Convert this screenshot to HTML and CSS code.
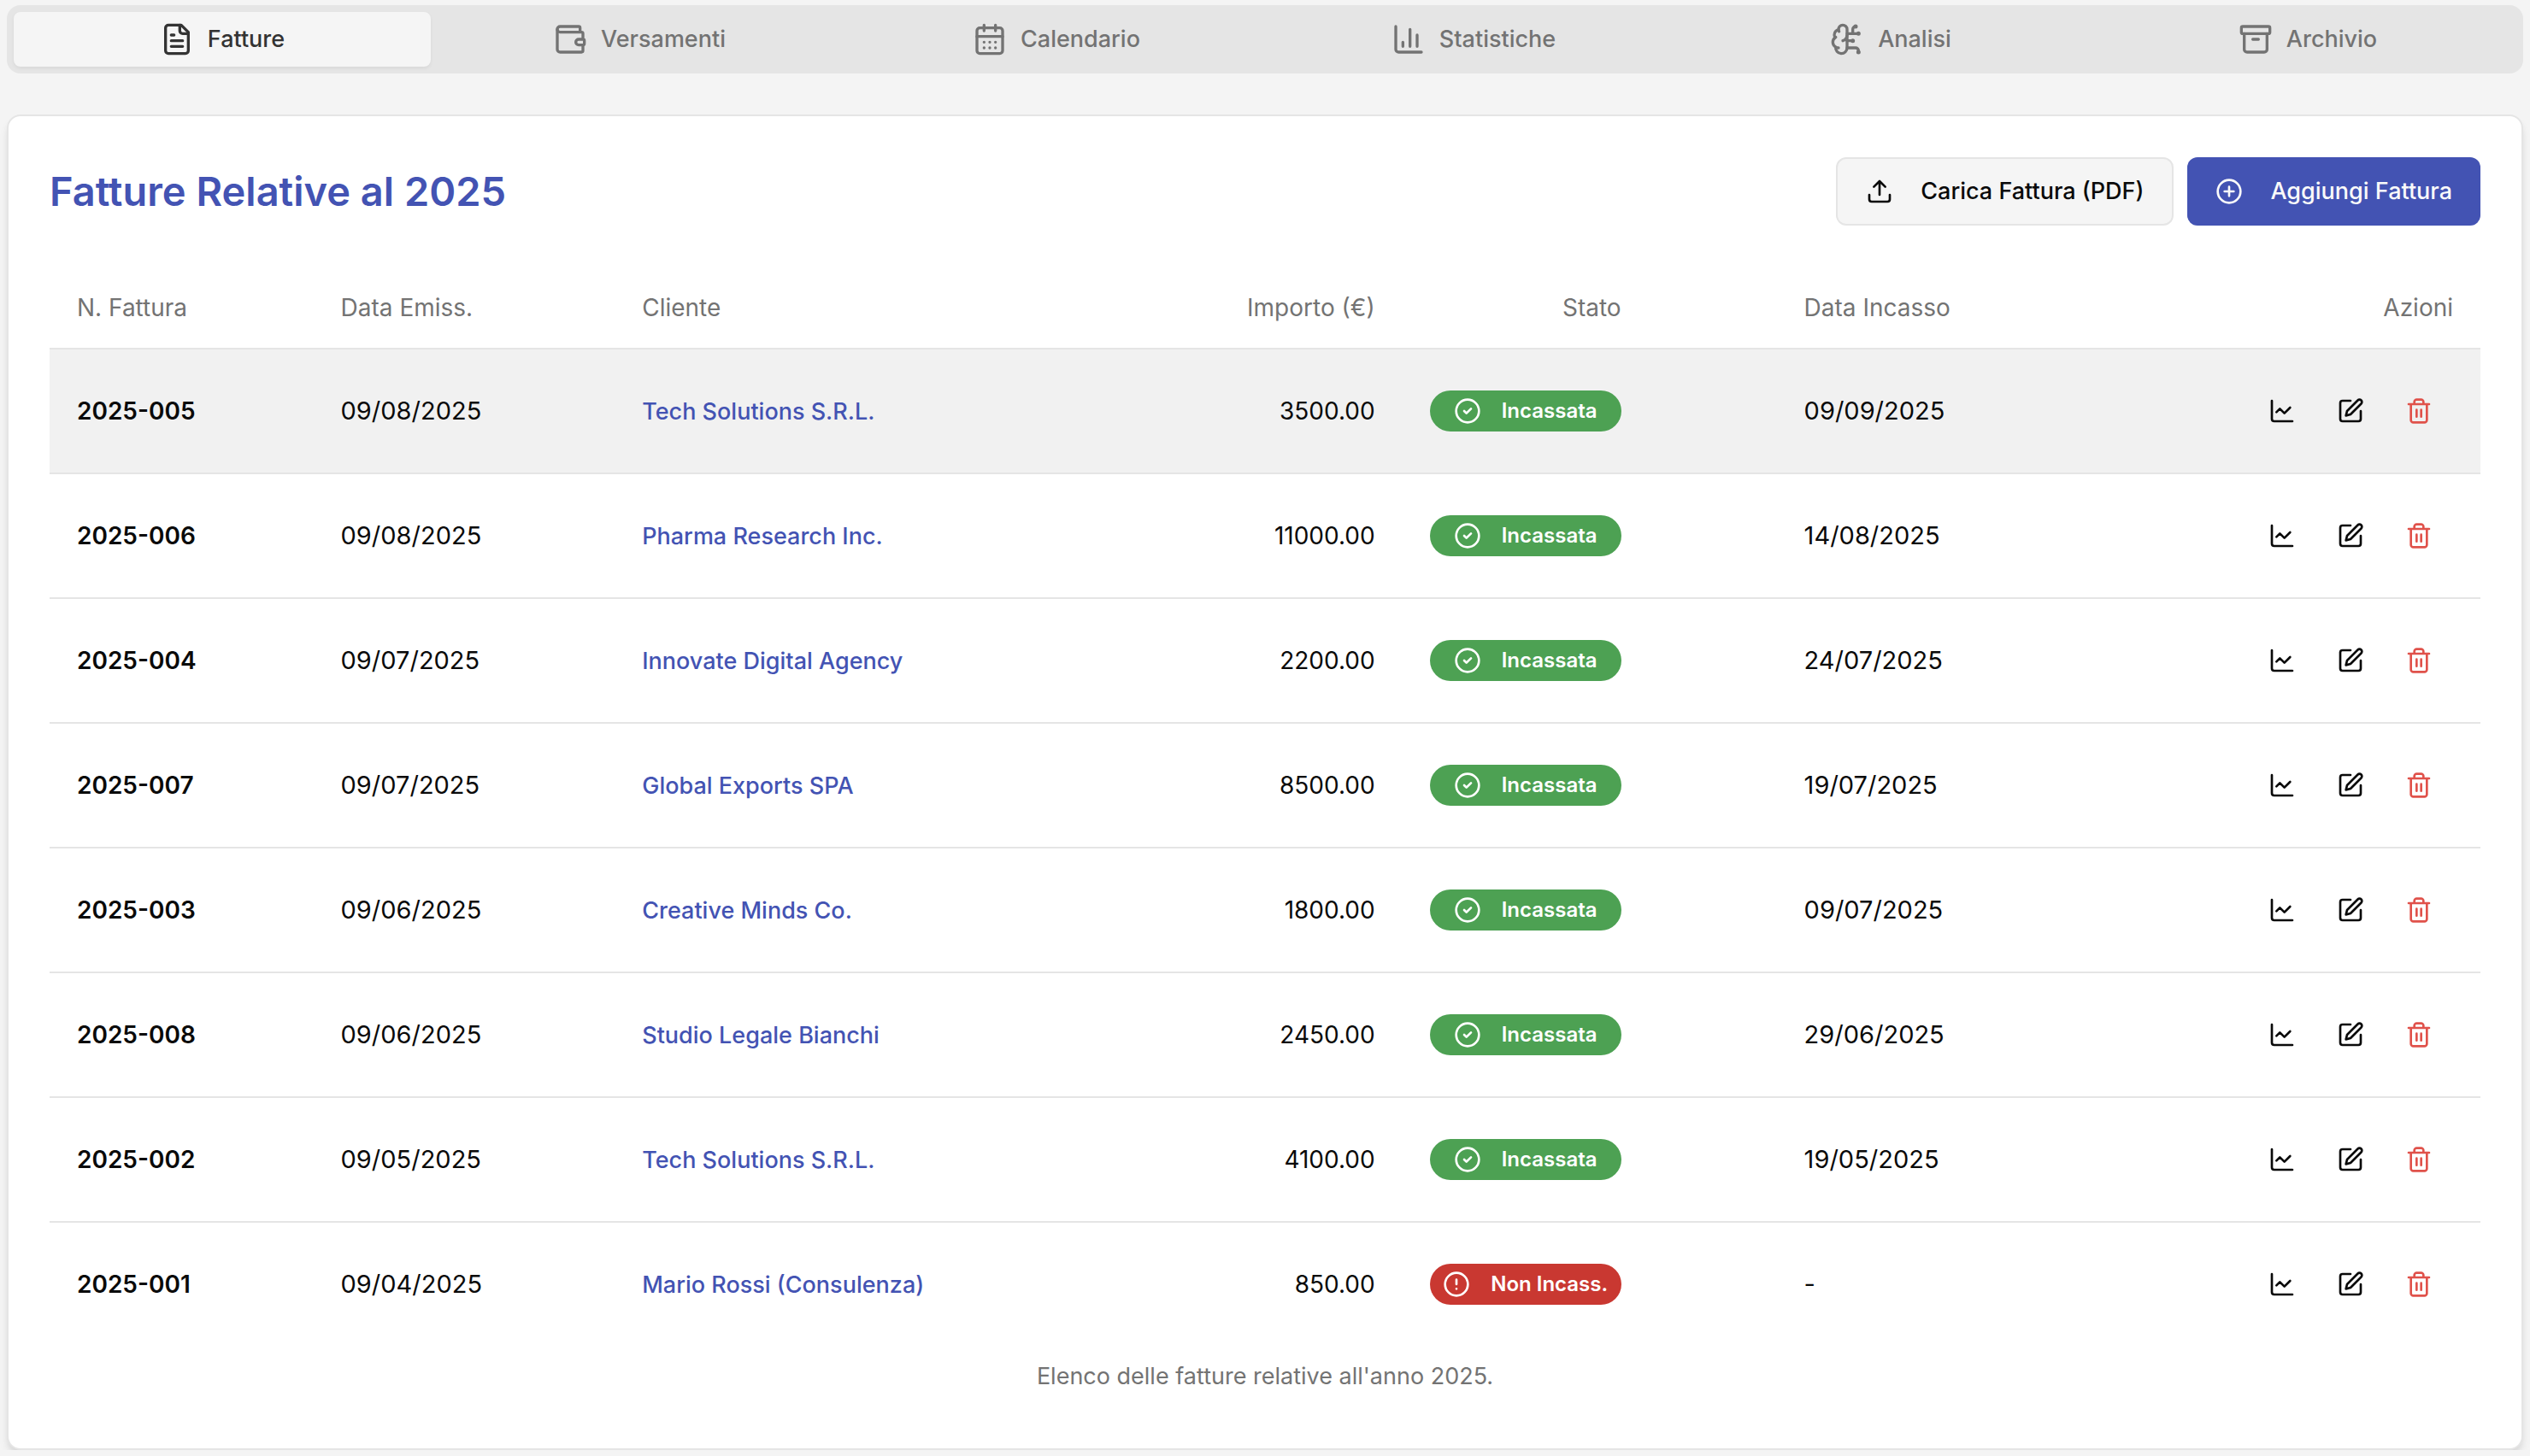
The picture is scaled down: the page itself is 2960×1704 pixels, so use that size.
FILE: index.html
```html
<!DOCTYPE html>
<html lang="it">
<head>
<meta charset="utf-8">
<meta name="viewport" content="width=device-width, initial-scale=1">
<title>Fatture Relative al 2025</title>
<link rel="stylesheet" href="styles.css">
<script src="app.js" defer></script>
</head>
<body>
<svg class="sprite" aria-hidden="true">
  <symbol id="i-file" viewBox="0 0 24 24"><path d="M15 2H6a2 2 0 0 0-2 2v16a2 2 0 0 0 2 2h12a2 2 0 0 0 2-2V7Z"/><path d="M14 2v4a2 2 0 0 0 2 2h4"/><path d="M10 9H8M16 13H8M16 17H8"/></symbol>
  <symbol id="i-wallet" viewBox="0 0 24 24"><path d="M19 7V4a1 1 0 0 0-1-1H5a2 2 0 0 0 0 4h15a1 1 0 0 1 1 1v4h-3a2 2 0 0 0 0 4h3a1 1 0 0 0 1-1v-2a1 1 0 0 0-1-1"/><path d="M3 5v14a2 2 0 0 0 2 2h15a1 1 0 0 0 1-1v-4"/></symbol>
  <symbol id="i-calendar" viewBox="0 0 24 24"><path d="M8 2v4M16 2v4"/><rect width="18" height="18" x="3" y="4" rx="2"/><path d="M3 10h18M8 14h.01M12 14h.01M16 14h.01M8 18h.01M12 18h.01M16 18h.01"/></symbol>
  <symbol id="i-bars" viewBox="0 0 24 24"><path d="M3 3v16a2 2 0 0 0 2 2h16"/><path d="M18 17V9M13 17V5M8 17v-3"/></symbol>
  <symbol id="i-brain" viewBox="0 0 24 24"><path d="M12 5a3 3 0 1 0-5.997.125 4 4 0 0 0-2.526 5.77 4 4 0 0 0 .556 6.588A4 4 0 1 0 12 18Z"/><path d="M9 13a4.5 4.5 0 0 0 3-4M6.003 5.125A3 3 0 0 0 6.401 6.5M3.477 10.896a4 4 0 0 1 .585-.396M6 18a4 4 0 0 1-1.967-.516M12 13h4M12 18h6a2 2 0 0 1 2 2v1M12 8h8M16 8V5a2 2 0 0 1 2-2"/><circle cx="16" cy="13" r=".5"/><circle cx="18" cy="3" r=".5"/><circle cx="20" cy="21" r=".5"/><circle cx="20" cy="8" r=".5"/></symbol>
  <symbol id="i-archive" viewBox="0 0 24 24"><rect width="20" height="5" x="2" y="3" rx="1"/><path d="M4 8v11a2 2 0 0 0 2 2h12a2 2 0 0 0 2-2V8M10 12h4"/></symbol>
  <symbol id="i-upload" viewBox="0 0 24 24"><path d="M21 15v4a2 2 0 0 1-2 2H5a2 2 0 0 1-2-2v-4M17 8l-5-5-5 5M12 3v12"/></symbol>
  <symbol id="i-plus" viewBox="0 0 24 24"><circle cx="12" cy="12" r="10"/><path d="M8 12h8M12 8v8"/></symbol>
  <symbol id="i-check" viewBox="0 0 24 24"><circle cx="12" cy="12" r="10"/><path d="m9 12 2 2 4-4"/></symbol>
  <symbol id="i-alert" viewBox="0 0 24 24"><circle cx="12" cy="12" r="10"/><path d="M12 8v4M12 16h.01"/></symbol>
  <symbol id="i-line" viewBox="0 0 24 24"><path d="M3 3v16a2 2 0 0 0 2 2h16"/><path d="m19 9-5 5-4-4-3 3"/></symbol>
  <symbol id="i-edit" viewBox="0 0 24 24"><path d="M12 3H5a2 2 0 0 0-2 2v14a2 2 0 0 0 2 2h14a2 2 0 0 0 2-2v-7"/><path d="M18.375 2.625a2.121 2.121 0 1 1 3 3L12 15l-4 1 1-4Z"/></symbol>
  <symbol id="i-trash" viewBox="0 0 24 24"><path d="M3 6h18M19 6v14c0 1-1 2-2 2H7c-1 0-2-1-2-2V6M8 6V4c0-1 1-2 2-2h4c1 0 2 1 2 2v2M10 11v6M14 11v6"/></symbol>
</svg>

<nav class="tabs" role="tablist" aria-label="Sezioni">
  <button class="tab tab-active" role="tab" aria-selected="true"><svg class="icon icon-lg"><use href="#i-file"/></svg>Fatture</button>
  <button class="tab" role="tab"><svg class="icon icon-lg"><use href="#i-wallet"/></svg>Versamenti</button>
  <button class="tab" role="tab"><svg class="icon icon-lg"><use href="#i-calendar"/></svg>Calendario</button>
  <button class="tab" role="tab"><svg class="icon icon-lg"><use href="#i-bars"/></svg>Statistiche</button>
  <button class="tab" role="tab"><svg class="icon icon-lg"><use href="#i-brain"/></svg>Analisi</button>
  <button class="tab" role="tab"><svg class="icon icon-lg"><use href="#i-archive"/></svg>Archivio</button>
</nav>

<main class="card">
  <header class="card-header">
    <h1 class="card-title">Fatture Relative al 2025</h1>
    <div class="card-actions">
      <button class="btn btn-outline"><svg class="icon"><use href="#i-upload"/></svg>Carica Fattura (PDF)</button>
      <button class="btn btn-primary"><svg class="icon"><use href="#i-plus"/></svg>Aggiungi Fattura</button>
    </div>
  </header>
  <table class="invoices">
    <caption>Elenco delle fatture relative all'anno 2025.</caption>
    <colgroup><col class="col-number"><col class="col-issued"><col class="col-client"><col class="col-amount"><col class="col-status"><col class="col-paid"><col class="col-actions"></colgroup>
    <thead>
      <tr><th>N. Fattura</th><th>Data Emiss.</th><th>Cliente</th><th class="right">Importo (€)</th><th><div class="status-label">Stato</div></th><th>Data Incasso</th><th class="right">Azioni</th></tr>
    </thead>
    <tbody id="rows"></tbody>
  </table>
</main>
</body>
</html>
```
FILE: app.js
```js
const invoices = [
  ["2025-005", "09/08/2025", "Tech Solutions S.R.L.", "3500.00", "09/09/2025"],
  ["2025-006", "09/08/2025", "Pharma Research Inc.", "11000.00", "14/08/2025"],
  ["2025-004", "09/07/2025", "Innovate Digital Agency", "2200.00", "24/07/2025"],
  ["2025-007", "09/07/2025", "Global Exports SPA", "8500.00", "19/07/2025"],
  ["2025-003", "09/06/2025", "Creative Minds Co.", "1800.00", "09/07/2025"],
  ["2025-008", "09/06/2025", "Studio Legale Bianchi", "2450.00", "29/06/2025"],
  ["2025-002", "09/05/2025", "Tech Solutions S.R.L.", "4100.00", "19/05/2025"],
  ["2025-001", "09/04/2025", "Mario Rossi (Consulenza)", "850.00", null],
];

const icon = (name) => `<svg class="icon"><use href="#i-${name}"/></svg>`;

const badge = (paid) => paid
  ? `<span class="badge badge-paid">${icon("check")}Incassata</span>`
  : `<span class="badge badge-unpaid">${icon("alert")}Non Incass.</span>`;

document.getElementById("rows").innerHTML = invoices.map(([number, issued, client, amount, paid], i) => `
  <tr${i === 0 ? ' class="row-active"' : ""}>
    <td class="number">${number}</td>
    <td class="date">${issued}</td>
    <td><a class="client" href="#">${client}</a></td>
    <td class="right">${amount}</td>
    <td>${badge(paid)}</td>
    <td class="date">${paid || "-"}</td>
    <td><div class="row-actions">
      <button class="icon-btn" aria-label="Andamento ${number}">${icon("line")}</button>
      <button class="icon-btn" aria-label="Modifica ${number}">${icon("edit")}</button>
      <button class="icon-btn icon-btn-danger" aria-label="Elimina ${number}">${icon("trash")}</button>
    </div></td>
  </tr>`).join("");
```
FILE: styles.css
```css
:root {
  --bg: #f4f4f4;
  --line: #e5e5e5;
  --text: #0a0a0a;
  --muted: #737373;
  --primary: #4353b3;
}

* { box-sizing: border-box; }

body {
  margin: 0;
  padding: 6px 8px 0;
  background: var(--bg);
  color: var(--text);
  font: 400 27px/40px Inter, "Liberation Sans", sans-serif;
}

button {
  border: 0;
  background: none;
  color: inherit;
  font: inherit;
  cursor: pointer;
}

.sprite { position: absolute; width: 0; height: 0; }

.icon {
  flex: none;
  display: block;
  width: 32px;
  height: 32px;
  fill: none;
  stroke: currentColor;
  stroke-width: 2;
  stroke-linecap: round;
  stroke-linejoin: round;
}

.icon-lg { width: 40px; height: 40px; }

.tabs {
  display: grid;
  grid-template-columns: repeat(6, 1fr);
  padding: 8px;
  border-radius: 16px;
  background: var(--line);
  color: var(--muted);
}

.tab {
  display: flex;
  align-items: center;
  justify-content: center;
  gap: 16px;
  height: 64px;
  padding: 0 24px;
  border-radius: 8px;
  font-weight: 500;
}

.tab-active {
  background: #f5f5f5;
  color: #333;
  box-shadow: 0 2px 4px rgb(0 0 0 / 6%);
}

.card {
  margin-top: 48px;
  padding: 48px;
  border: 2px solid var(--line);
  border-radius: 16px;
  background: #fff;
  box-shadow: 0 8px 12px -2px rgb(0 0 0 / 10%), 0 4px 8px -4px rgb(0 0 0 / 10%);
}

.card-header {
  display: flex;
  align-items: center;
  justify-content: space-between;
  padding-bottom: 48px;
}

.card-title {
  margin: 0;
  color: var(--primary);
  font-size: 47px;
  font-weight: 600;
  line-height: 48px;
}

.card-actions { display: flex; gap: 16px; }

.btn {
  display: flex;
  align-items: center;
  gap: 32px;
  height: 80px;
  padding: 0 33px;
  border-radius: 12px;
  font-weight: 500;
}

.btn-outline { border: 2px solid var(--line); background: #f5f5f5; }

.btn-primary { background: var(--primary); color: #fafafa; }

.invoices {
  width: 100%;
  table-layout: fixed;
  border-collapse: collapse;
  caption-side: bottom;
  font-size: 28px;
}

.invoices caption { padding: 16px 0; color: var(--muted); font-size: 27px; }

.col-number { width: 10.85%; }
.col-issued { width: 12.4%; }
.col-client { width: 20%; }
.col-amount { width: 12.4%; }
.col-status { width: 15.4%; }
.col-paid { width: 14%; }

.invoices th {
  height: 96px;
  padding: 0 32px;
  color: var(--muted);
  font-weight: 400;
  text-align: left;
}

.invoices td { padding: 32px; }

.invoices tr { border-bottom: 2px solid var(--line); }
.invoices tbody tr:last-child { border-bottom: 0; }

.invoices .right { text-align: right; }

.row-active { background: #f1f1f1; }

.number { font-weight: 600; }

.date { font-size: 29px; }

.client {
  color: var(--primary);
  font-size: 27px;
  font-weight: 500;
  text-decoration: none;
}

.status-label { width: 224px; text-align: right; }

.badge {
  display: flex;
  align-items: center;
  justify-content: center;
  gap: 24px;
  width: 224px;
  height: 48px;
  border-radius: 24px;
  color: #fff;
  font-size: 24px;
  font-weight: 600;
}

.badge-paid { background: #4da153; }
.badge-unpaid { background: #c93831; }

.row-actions { display: flex; justify-content: flex-end; }

.icon-btn {
  display: flex;
  align-items: center;
  justify-content: center;
  width: 80px;
  height: 80px;
  padding: 0;
}

.icon-btn-danger { color: #e0524b; }
```
